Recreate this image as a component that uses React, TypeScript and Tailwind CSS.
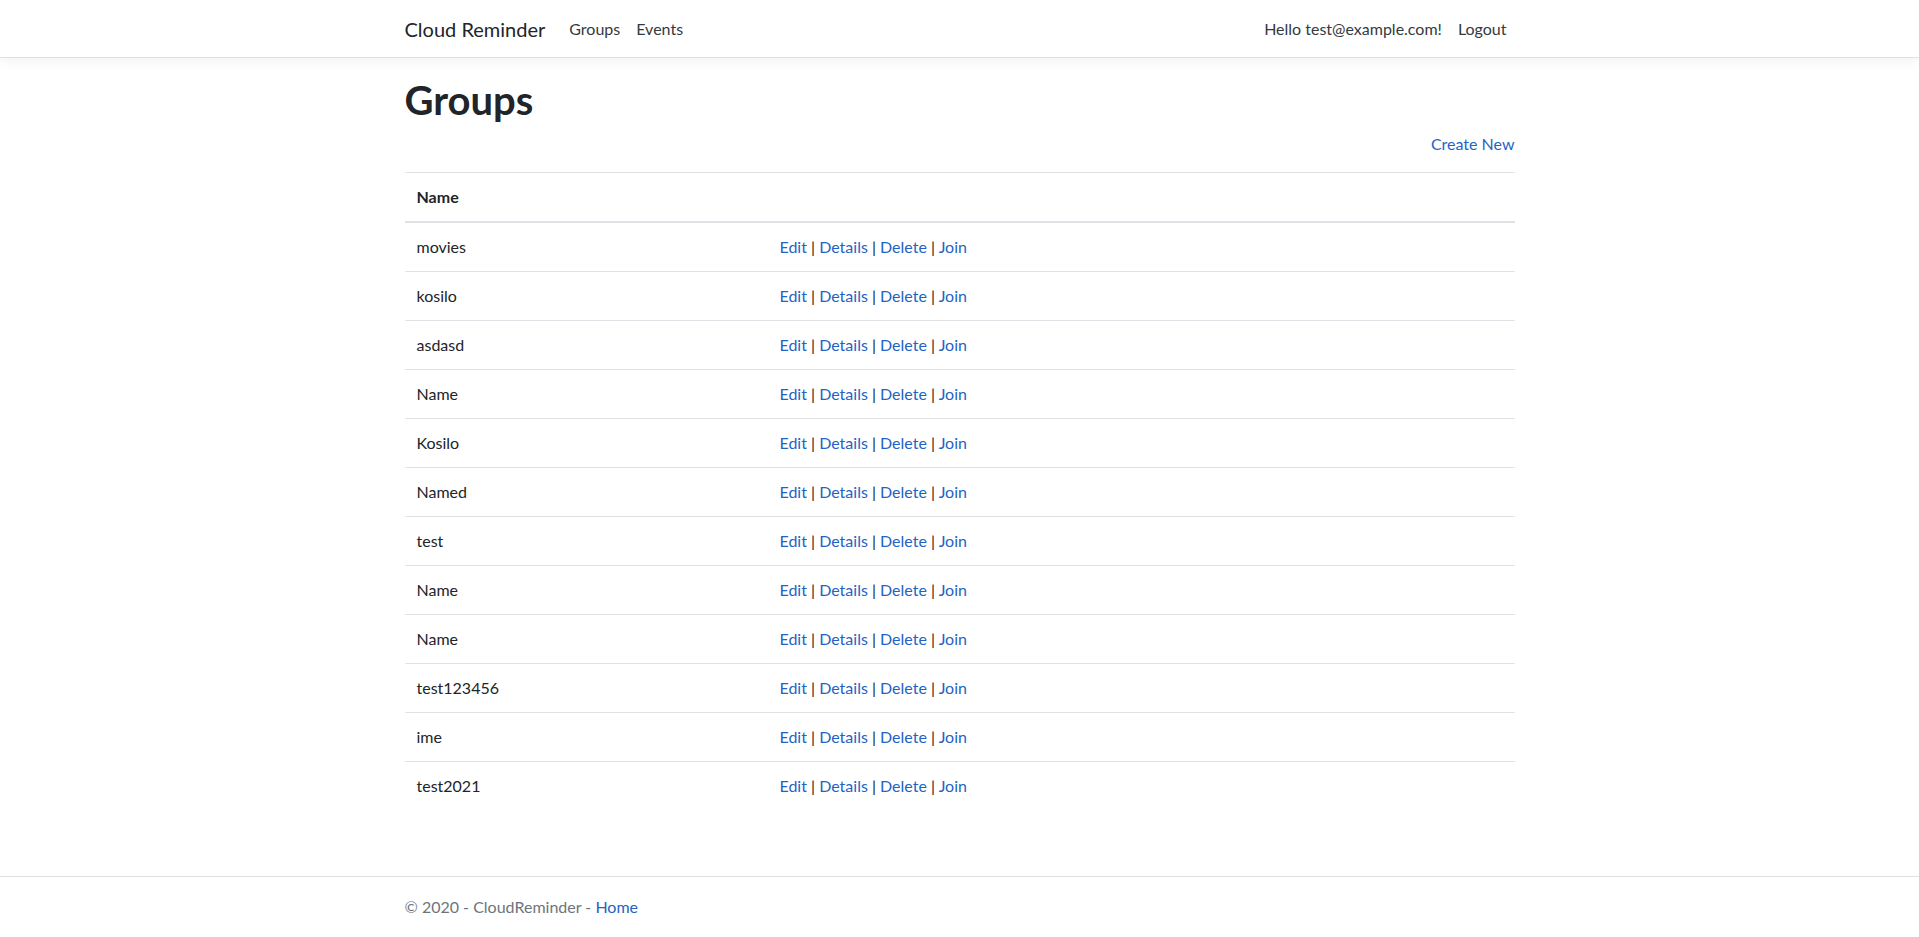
import React from 'react';

const groups = [
  'movies',
  'kosilo',
  'asdasd',
  'Name',
  'Kosilo',
  'Named',
  'test',
  'Name',
  'Name',
  'test123456',
  'ime',
  'test2021',
];

const actions = ['Edit', 'Details', 'Delete', 'Join'];

export default function App() {
  return (
    <div
      className="flex min-h-[937px] flex-col bg-white text-base leading-6 text-[#212529]"
      style={{ fontFamily: '"Segoe UI", Lato, "Liberation Sans", sans-serif' }}
    >
      <header>
        <nav className="mb-4 border-b border-[#dee2e6] bg-white px-4 py-2 shadow-[0_4px_12px_rgba(0,0,0,0.05)]">
          <div className="mx-auto flex w-[1140px] items-center px-[15px] pt-px">
            <a className="mr-4 py-[5px] text-xl leading-[30px] text-[#212529]">Cloud Reminder</a>
            <ul className="flex flex-1">
              <li>
                <a className="block px-2 py-2 text-[#343a40]">Groups</a>
              </li>
              <li>
                <a className="block px-2 py-2 text-[#343a40]">Events</a>
              </li>
            </ul>
            <ul className="flex">
              <li>
                <a className="block px-2 py-2 text-[#343a40]">Hello test@example.com!</a>
              </li>
              <li>
                <button className="block px-2 py-2 text-[#343a40]">Logout</button>
              </li>
            </ul>
          </div>
        </nav>
      </header>

      <div className="mx-auto w-[1140px] px-[15px] pt-[2px]">
        <main className="pb-4">
          <h1 className="mb-2 text-[40px] font-bold leading-[48px]">Groups</h1>
          <p className="mb-4 text-right">
            <a className="text-[#2463c4]">Create New</a>
          </p>
          <table className="mb-4 w-full border-collapse">
            <thead>
              <tr>
                <th className="w-[363px] border-t border-b-2 border-[#dee2e6] p-3 text-left font-bold">Name</th>
                <th className="border-t border-b-2 border-[#dee2e6] p-3" />
              </tr>
            </thead>
            <tbody>
              {groups.map((g, i) => (
                <tr key={i}>
                  <td className="border-t border-[#dee2e6] p-3">{g}</td>
                  <td className="border-t border-[#dee2e6] p-3">
                    {actions.map((a, j) => (
                      <React.Fragment key={a}>
                        {j > 0 && ' | '}
                        <a className="text-[#2463c4]">{a}</a>
                      </React.Fragment>
                    ))}
                  </td>
                </tr>
              ))}
            </tbody>
          </table>
        </main>
      </div>

      <footer className="mt-auto border-t border-[#dee2e6] leading-[60px] text-[#6c757d]">
        <div className="mx-auto w-[1140px] px-[15px]">
          © 2020 - CloudReminder - <a className="text-[#2463c4]">Home</a>
        </div>
      </footer>
    </div>
  );
}
